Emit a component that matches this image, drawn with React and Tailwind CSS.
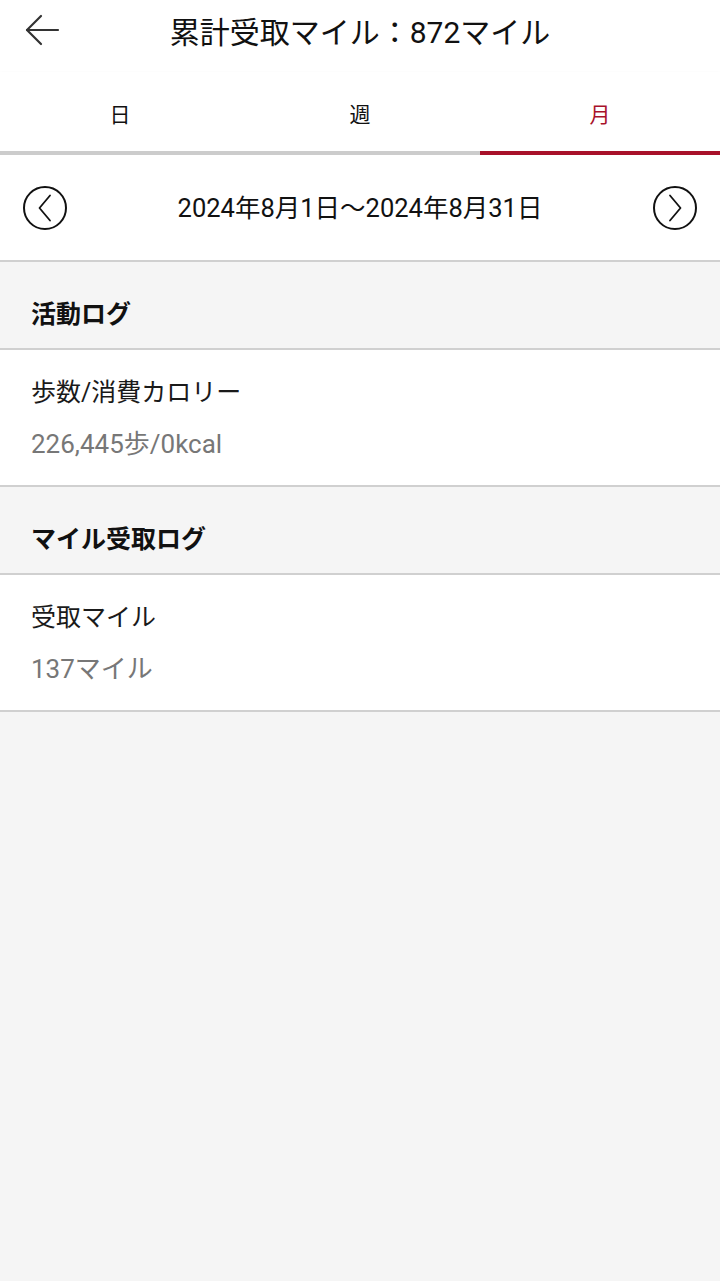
const font = { fontFamily: 'Roboto, "Noto Sans CJK JP", sans-serif' };

function CircleButton({ dir }) {
  return (
    <button className="w-[44px] h-[44px] rounded-full border-2 border-[#111] flex items-center justify-center">
      <svg width="16" height="28" viewBox="0 0 16 28" fill="none" stroke="#111" strokeWidth="1.8" strokeLinecap="round" strokeLinejoin="round">
        {dir === 'left' ? <path d="M13 1.5L2.5 14 13 26.5" /> : <path d="M3 1.5L13.5 14 3 26.5" />}
      </svg>
    </button>
  );
}

function SectionHeader({ title }) {
  return (
    <div className="bg-[#f5f5f5] h-[88px] px-[31px] pt-[38px] border-b-2 border-[#d0d0d0]">
      <h2 className="text-[25px] leading-[30px] font-bold text-[#111]">{title}</h2>
    </div>
  );
}

function Item({ label, value }) {
  return (
    <div className="bg-white h-[137px] px-[31px] pt-[28px] border-b-2 border-[#d0d0d0]">
      <p className="text-[25px] leading-[30px] text-[#1a1a1a]">{label}</p>
      <p className="text-[26px] leading-[30px] text-[#777] mt-[21px]">{value}</p>
    </div>
  );
}

export default function App() {
  const tabs = ['日', '週', '月'];
  const active = 2;

  return (
    <div className="min-h-[1281px] bg-[#f5f5f5]" style={font}>
      {/* Header */}
      <div className="bg-white grid grid-cols-[80px_1fr_80px] items-center h-[72px]">
        <button className="pl-[24px] pb-[12px]">
          <svg width="36" height="34" viewBox="0 0 36 34" fill="none" stroke="#333" strokeWidth="2.2" strokeLinecap="round" strokeLinejoin="round">
            <path d="M34 17H3" />
            <path d="M17 3L3 17l14 14" />
          </svg>
        </button>
        <h1 className="text-center text-[30px] leading-[36px] text-[#111] pb-[6px]">累計受取マイル：872マイル</h1>
        <div />
      </div>

      {/* Tabs */}
      <div className="bg-white grid grid-cols-3 shadow-[0_2px_4px_rgba(0,0,0,0.08)]">
        {tabs.map((t, i) => (
          <div
            key={t}
            className={`h-[83px] flex items-center justify-center border-b-4 text-[21px] ${
              i === active ? 'border-[#a8112a] text-[#a8112a]' : 'border-[#cccccc] text-[#111]'
            }`}
          >
            <span className="pt-[8px]">{t}</span>
          </div>
        ))}
      </div>

      {/* Date range */}
      <div className="bg-white h-[107px] flex items-center justify-between px-[23px] border-b-2 border-[#d0d0d0]">
        <CircleButton dir="left" />
        <span className="text-[25.5px] text-[#111] pt-[2px]">2024年8月1日〜2024年8月31日</span>
        <CircleButton dir="right" />
      </div>

      <SectionHeader title="活動ログ" />
      <Item label="歩数/消費カロリー" value="226,445歩/0kcal" />
      <SectionHeader title="マイル受取ログ" />
      <Item label="受取マイル" value="137マイル" />
    </div>
  );
}
